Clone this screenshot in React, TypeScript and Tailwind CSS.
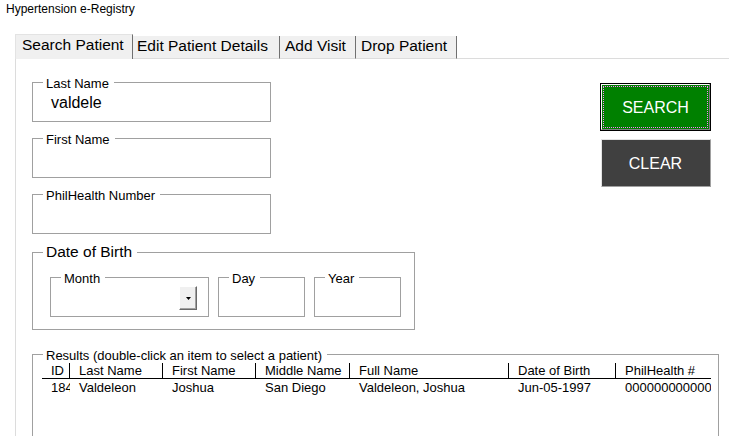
import React from "react";

const Box = ({
  label,
  className,
  labelClass = "text-[13px] leading-[15px] -top-[7px]",
  children,
}: {
  label: string;
  className: string;
  labelClass?: string;
  children?: React.ReactNode;
}) => (
  <div className={`relative border border-[#a0a0a0] ${className}`}>
    <span className={`absolute left-[10px] bg-white pl-[3px] pr-[5px] text-black whitespace-nowrap ${labelClass}`}>
      {label}
    </span>
    {children}
  </div>
);

const cols = [
  { h: "ID", w: "w-[28px]", v: "184" },
  { h: "Last Name", w: "w-[93px]", v: "Valdeleon" },
  { h: "First Name", w: "w-[93px]", v: "Joshua" },
  { h: "Middle Name", w: "w-[94px]", v: "San Diego" },
  { h: "Full Name", w: "w-[159px]", v: "Valdeleon, Joshua" },
  { h: "Date of Birth", w: "w-[107px]", v: "Jun-05-1997" },
  { h: "PhilHealth #", w: "w-[95px]", v: "000000000000" },
];

export default function App() {
  return (
    <div className="w-[729px] h-[436px] overflow-hidden bg-white font-['Liberation_Sans',Arial,sans-serif] text-black">
      <div className="pt-[2px] pl-[6px] text-[12px] leading-[14px]">Hypertension e-Registry</div>

      {/* Tabs */}
      <div className="mt-[18px] flex items-end h-[25px]">
        <div className="w-[15px] h-full" />
        <div className="w-[118px] h-[25px] bg-[#f0f0f0] border-t border-l border-[#e3e3e3] border-r border-r-[#707070] pl-[6px] pt-[1px] text-[15.5px] leading-[18px] whitespace-nowrap">
          Search Patient
        </div>
        <div className="w-[147px] h-[23px] bg-[#f0f0f0] border-b border-b-[#dcdcdc] border-r border-r-[#707070] pl-[4px] pt-[1px] text-[15.5px] leading-[18px] whitespace-nowrap">
          Edit Patient Details
        </div>
        <div className="w-[76px] h-[23px] bg-[#f0f0f0] border-b border-b-[#dcdcdc] border-r border-r-[#707070] pl-[5px] pt-[1px] text-[15.5px] leading-[18px] whitespace-nowrap">
          Add Visit
        </div>
        <div className="w-[101px] h-[23px] bg-[#f0f0f0] border-b border-b-[#dcdcdc] border-r border-r-[#707070] pl-[5px] pt-[1px] text-[15.5px] leading-[18px] whitespace-nowrap">
          Drop Patient
        </div>
        <div className="flex-1 h-full border-b border-b-[#dcdcdc]" />
      </div>

      {/* Panel */}
      <div className="ml-[15px] border-l border-[#dcdcdc] h-[377px] pl-[16px]">
        <div className="flex items-start">
          <div className="mt-[23px] flex flex-col">
            <Box label="Last Name" className="w-[239px] h-[40px]">
              <div className="pl-[18px] pt-[11px] text-[16px] leading-[18px]">valdele</div>
            </Box>
            <Box label="First Name" className="mt-[16px] w-[239px] h-[40px]" />
            <Box label="PhilHealth Number" className="mt-[16px] w-[239px] h-[40px]" />
            <Box
              label="Date of Birth"
              className="mt-[18px] w-[383px] h-[78px]"
              labelClass="text-[15.5px] leading-[18px] -top-[10px]"
            >
              <div className="flex gap-[9px] pt-[24px] pl-[17px]">
                <Box label="Month" className="w-[159px] h-[40px]">
                  <div className="flex justify-end pt-[8px] pr-[11px]">
                    <div className="w-[18px] h-[24px] bg-[#f0f0f0] border border-t-white border-l-white border-r-[#696969] border-b-[#696969] shadow-[inset_-1px_-1px_0_#a0a0a0] flex items-center justify-center">
                      <svg width="5" height="3" viewBox="0 0 5 3">
                        <polygon points="0,0 5,0 2.5,3" fill="#000" />
                      </svg>
                    </div>
                  </div>
                </Box>
                <Box label="Day" className="w-[87px] h-[40px]" />
                <Box label="Year" className="w-[87px] h-[40px]" />
              </div>
            </Box>
          </div>

          <div className="ml-auto mr-[18px] mt-[24px] flex flex-col items-center">
            <div className="w-[111px] h-[48px] border border-black">
              <div className="h-full border border-t-white border-l-white border-r-[#808080] border-b-[#808080] bg-[#008000] p-[1px]">
                <div className="h-full border border-dotted border-[#ff80ff] flex items-center justify-center text-white text-[16px] leading-[18px] pt-[1px]">
                  SEARCH
                </div>
              </div>
            </div>
            <div className="mt-[8px] w-[110px] h-[48px] bg-[#404040] border border-t-[#e3e3e3] border-l-[#e3e3e3] border-r-[#a0a0a0] border-b-[#a0a0a0] flex items-center justify-center text-white text-[16px] leading-[18px] pt-[1px]">
              CLEAR
            </div>
          </div>
        </div>

        <Box
          label="Results (double-click an item to select a patient)"
          className="mt-[24px] w-[687px] h-[120px]"
        >
          <div className="mt-[8px] ml-[9px] w-[669px]">
            <div className="flex border-b border-black">
              {cols.map((c, i) => (
                <div
                  key={c.h}
                  className={`${c.w} h-[15px] pl-[9px] text-[13px] leading-[16px] whitespace-nowrap overflow-hidden ${
                    i < cols.length - 1 ? "border-r border-black" : ""
                  }`}
                >
                  {c.h}
                </div>
              ))}
            </div>
            <div className="flex">
              {cols.map((c) => (
                <div
                  key={c.h}
                  className={`${c.w} h-[16px] pl-[9px] pr-[1px] text-[13px] leading-[17px] whitespace-nowrap overflow-hidden`}
                >
                  {c.v}
                </div>
              ))}
            </div>
          </div>
        </Box>
      </div>
    </div>
  );
}
